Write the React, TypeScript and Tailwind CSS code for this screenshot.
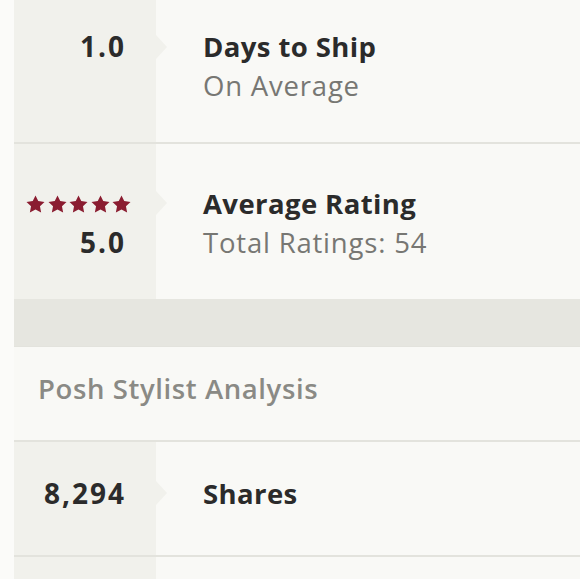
import React from "react";

const font = { fontFamily: "'Open Sans', Lato, sans-serif" };

function Star() {
  return (
    <svg width="19" height="18" viewBox="0 0 24 23" className="block">
      <path
        d="M12 0.5l3.5 7.3 8 1-5.8 5.5 1.5 8L12 18.4l-7.2 3.9 1.5-8L0.5 8.8l8-1z"
        fill="#8a1c30"
      />
    </svg>
  );
}

function Arrow({ top }: { top: string }) {
  return (
    <div
      className={`absolute left-[142px] ${top} h-0 w-0 border-y-[12px] border-l-[11px] border-y-transparent border-l-[#f1f1ec]`}
    />
  );
}

function StatRow({
  value,
  stars,
  title,
  sub,
  h,
  pt,
  arrowTop,
  border = true,
}: {
  value: string;
  stars?: boolean;
  title: string;
  sub?: string;
  h: string;
  pt: string;
  arrowTop: string;
  border?: boolean;
}) {
  return (
    <div className={`flex ${h} ${border ? "border-b-2 border-[#e3e3dd]" : ""}`}>
      <div className={`relative w-[142px] shrink-0 bg-[#f1f1ec] ${pt}`}>
        {stars && (
          <div className="flex h-[39px] items-center justify-end gap-[2.5px] pr-[25px]">
            <Star />
            <Star />
            <Star />
            <Star />
            <Star />
          </div>
        )}
        <div className="h-[39px] pr-[30px] text-right text-[28px] font-bold leading-[39px] tracking-[2px] text-[#2b2b2b]">
          {value}
        </div>
        <Arrow top={arrowTop} />
      </div>
      <div className={`flex-1 bg-[#f9f9f6] pl-[47px] ${pt}`}>
        <div className="h-[39px] text-[27.5px] font-bold leading-[39px] tracking-[0.4px] text-[#2b2b2b]">
          {title}
        </div>
        {sub && (
          <div className="h-[39px] text-[27.5px] leading-[39px] tracking-[0.8px] text-[#777773]">{sub}</div>
        )}
      </div>
    </div>
  );
}

export default function App() {
  return (
    <div className="h-[579px] w-[580px] overflow-hidden bg-[#fbfbf9] pl-[14px]" style={font}>
      <div className="flex flex-col">
        <StatRow value="1.0" title="Days to Ship" sub="On Average" h="h-[144px]" pt="pt-[27px]" arrowTop="top-[35px]" />
        <StatRow
          value="5.0"
          stars
          title="Average Rating"
          sub="Total Ratings: 54"
          h="h-[155px]"
          pt="pt-[40px]"
          arrowTop="top-[47px]"
          border={false}
        />
        <div className="h-[48px] border-b border-[#e3e3dd] bg-[#e6e6e0]" />
        <div className="flex h-[95px] items-center border-b-2 border-[#e3e3dd] bg-[#f9f9f6] pb-[10px] pl-[24px]">
          <span className="text-[27.5px] font-semibold tracking-[0.6px] text-[#8a8a85]">Posh Stylist Analysis</span>
        </div>
        <StatRow value="8,294" title="Shares" h="h-[115px]" pt="pt-[32px]" arrowTop="top-[39px]" />
        <div className="flex h-[40px]">
          <div className="w-[142px] bg-[#f1f1ec]" />
          <div className="flex-1 bg-[#f9f9f6]" />
        </div>
      </div>
    </div>
  );
}
